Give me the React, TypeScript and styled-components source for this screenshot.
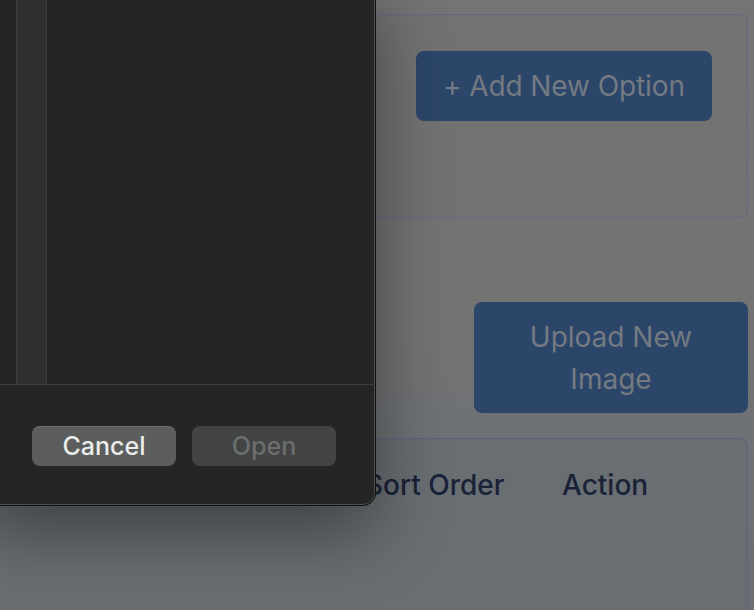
import React from "react"
import styled, { createGlobalStyle } from "styled-components"

const GlobalStyle = createGlobalStyle`
  html, body {
    margin: 0;
    padding: 0;
    background: #747474;
  }
  * {
    box-sizing: border-box;
  }
`

const Page = styled.div`
  position: relative;
  width: 754px;
  height: 610px;
  overflow: hidden;
  background: linear-gradient(180deg, #747474 0%, #737373 55%, #6d7176 75%, #6a6f74 100%);
  font-family: Inter, "Noto Sans", sans-serif;
`

const Content = styled.main`
  display: flex;
  flex-direction: column;
  padding: 14px 6px 0 0;
`

const OptionsCard = styled.section`
  display: flex;
  justify-content: flex-end;
  align-items: flex-start;
  height: 204px;
  padding: 36px 35px;
  background: #727272;
  border: 1px solid #5f6a7e;
  border-left: none;
  border-radius: 0 6px 6px 0;
`

const BlueButton = styled.button<{ $wide?: boolean }>`
  display: flex;
  align-items: center;
  justify-content: center;
  padding: ${(p) => (p.$wide ? "13px 40px" : "14px 0")};
  width: ${(p) => (p.$wide ? "274px" : "296px")};
  height: ${(p) => (p.$wide ? "111px" : "70px")};
  white-space: ${(p) => (p.$wide ? "normal" : "nowrap")};
  background: #2c4669;
  color: #737a82;
  border: none;
  border-radius: 8px;
  font-family: Inter, "Noto Sans", sans-serif;
  font-size: 28px;
  line-height: 42px;
  letter-spacing: ${(p) => (p.$wide ? "0" : "-0.1px")};
  text-align: center;
`

const UploadRow = styled.div`
  display: flex;
  justify-content: flex-end;
  margin-top: 84px;
`

const TableCard = styled.section`
  margin-top: 25px;
  height: 200px;
  padding: 25px 24px;
  background: #696e73;
  border: 1px solid #5a657c;
  border-left: none;
  border-radius: 0 8px 0 0;
`

const HeaderRow = styled.div`
  display: grid;
  grid-template-columns: 120px 221px 197px auto;
`

const HeaderCell = styled.div`
  color: #1a2238;
  font-size: 28px;
  font-weight: 500;
  line-height: 42px;
`

const Dialog = styled.div`
  position: absolute;
  left: -20px;
  top: -20px;
  width: 396px;
  height: 526px;
  display: flex;
  flex-direction: column;
  background: #232625;
  border: 1px solid #0d0e0e;
  border-radius: 13px;
  box-shadow: inset 0 0 0 1px #4e5150, 0 26px 70px rgba(0, 0, 0, 0.42);
  overflow: hidden;
  font-family: Inter, "Noto Sans", sans-serif;
`

const Browser = styled.div`
  display: flex;
  height: 404px;
  border-bottom: 1px solid #3b3e3d;
`

const SidePad = styled.div`
  width: 35px;
`

const Column = styled.div`
  width: 31px;
  background: #2d302f;
  border-left: 1px solid #3a3d3c;
  border-right: 1px solid #3a3d3c;
`

const FileArea = styled.div`
  flex: 1;
`

const Footer = styled.div`
  display: flex;
  gap: 16px;
  padding: 41px 0 0 51px;
`

const DialogButton = styled.button<{ $disabled?: boolean }>`
  width: 144px;
  height: 40px;
  border: none;
  border-radius: 8px;
  background: ${(p) => (p.$disabled ? "#414443" : "#5b5e5d")};
  color: ${(p) => (p.$disabled ? "#6c6f6e" : "#ececec")};
  box-shadow: ${(p) => (p.$disabled ? "none" : "inset 0 1px 0 rgba(255,255,255,0.12)")};
  font-family: Inter, "Noto Sans", sans-serif;
  font-size: 25px;
  font-weight: 500;
  line-height: 40px;
  padding: 0;
`

export default function App() {
  return (
    <>
      <GlobalStyle />
      <Page>
        <Content>
          <OptionsCard>
            <BlueButton>+ Add New Option</BlueButton>
          </OptionsCard>
          <UploadRow>
            <BlueButton $wide>Upload New Image</BlueButton>
          </UploadRow>
          <TableCard>
            <HeaderRow>
              <HeaderCell>Image</HeaderCell>
              <HeaderCell>Title</HeaderCell>
              <HeaderCell>Sort Order</HeaderCell>
              <HeaderCell>Action</HeaderCell>
            </HeaderRow>
          </TableCard>
        </Content>
        <Dialog>
          <Browser>
            <SidePad />
            <Column />
            <FileArea />
          </Browser>
          <Footer>
            <DialogButton>Cancel</DialogButton>
            <DialogButton $disabled>Open</DialogButton>
          </Footer>
        </Dialog>
      </Page>
    </>
  )
}
